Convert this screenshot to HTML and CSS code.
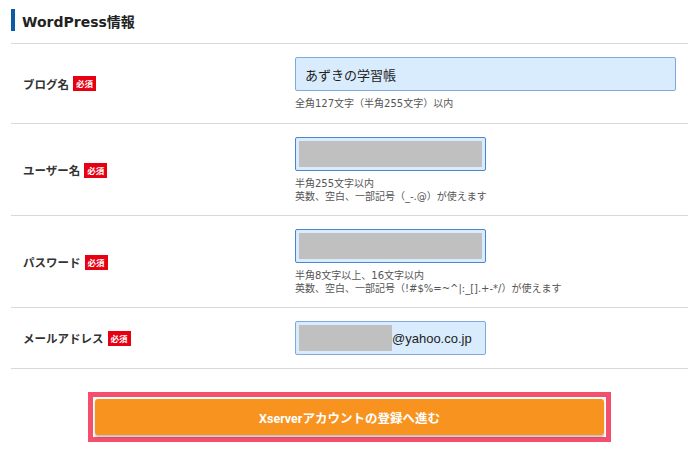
FILE: index.html
```html
<!DOCTYPE html>
<html lang="ja">

<head>
    <meta charset="UTF-8">
    <meta name="viewport" content="width=device-width, initial-scale=1.0">
    <link rel="stylesheet" href="styles.css">
    <title>WordPress情報</title>
</head>

<body>
    <div class="section">
        <h2 class="section-title">WordPress情報</h2>

        <div class="row row-first">
            <div class="label">ブログ名<span class="required">必須</span></div>
            <div class="field">
                <div class="input wide">あずきの学習帳</div>
                <p class="note">全角127文字（半角255文字）以内</p>
            </div>
        </div>

        <div class="row">
            <div class="label">ユーザー名<span class="required">必須</span></div>
            <div class="field">
                <div class="input"><span class="mask full"></span></div>
                <p class="note">半角255文字以内<br>英数、空白、一部記号（_-.@）が使えます</p>
            </div>
        </div>

        <div class="row">
            <div class="label">パスワード<span class="required">必須</span></div>
            <div class="field">
                <div class="input"><span class="mask full"></span></div>
                <p class="note">半角8文字以上、16文字以内<br>英数、空白、一部記号（!#$%=~^|:_[].+-*/）が使えます</p>
            </div>
        </div>

        <div class="row row-last">
            <div class="label">メールアドレス<span class="required">必須</span></div>
            <div class="field">
                <div class="input mail"><span class="mask part"></span>@yahoo.co.jp</div>
            </div>
        </div>

        <div class="actions">
            <div class="highlight">
                <button class="submit">Xserverアカウントの登録へ進む</button>
            </div>
        </div>
    </div>
</body>

</html>
```

FILE: styles.css
```css
* {
    margin: 0;
    padding: 0;
    box-sizing: border-box;
}

body {
    background-color: #fff;
    font-family: 'Noto Sans CJK JP', 'Noto Sans', sans-serif;
    color: #333;
}

.section {
    margin: 0 12px 0 11px;
}

.section-title {
    display: flex;
    align-items: center;
    height: 44px;
    padding: 0 0 2px 11px;
    font-family: 'DejaVu Sans', 'Noto Sans CJK JP', sans-serif;
    font-size: 14px;
    font-weight: bold;
    color: #222;
    border-bottom: 1px solid #d8d8d8;
    position: relative;
}

.section-title::before {
    content: '';
    position: absolute;
    left: 0;
    top: 9px;
    width: 4px;
    height: 22px;
    background-color: #0d5aa7;
}

.row {
    display: flex;
    align-items: center;
    padding: 13px 0 12px;
    border-bottom: 1px solid #d8d8d8;
}

.row-first,
.row-last {
    padding-bottom: 13px;
}

.label {
    width: 284px;
    padding-left: 12px;
    display: flex;
    align-items: center;
    font-size: 11.5px;
    font-weight: bold;
    color: #333;
}

.required {
    display: inline-block;
    margin-left: 4px;
    padding: 0 3px;
    height: 15px;
    line-height: 15px;
    font-size: 8.5px;
    font-weight: bold;
    color: #fff;
    background-color: #e60012;
}

.field {
    flex: 1;
}

.input {
    display: flex;
    align-items: center;
    width: 191px;
    height: 34px;
    padding: 0 3px;
    border: 1px solid #4a86c8;
    border-radius: 2px;
    background-color: #d9ecfd;
    font-size: 13px;
    color: #222;
}

.input.wide {
    width: 381px;
    padding-left: 9px;
    border-color: #7ea9d8;
}

.input.mail {
    font-family: 'Liberation Sans', Arial, sans-serif;
    font-size: 13px;
    border-color: #7ea9d8;
}

.mask {
    display: block;
    height: 26px;
    background-color: #c0c0c0;
}

.mask.full {
    width: 100%;
}

.mask.part {
    width: 93px;
}

.note {
    margin-top: 6px;
    font-family: 'DejaVu Sans', 'Noto Sans CJK JP', sans-serif;
    font-size: 10px;
    line-height: 13px;
    color: #555;
}

.actions {
    display: flex;
    padding: 23px 0 0 77px;
}

.highlight {
    width: 523px;
    padding: 2px;
    border: 5px solid #f54f6e;
}

.submit {
    display: block;
    width: 100%;
    height: 36px;
    border: none;
    border-radius: 3px;
    background-color: #f7931e;
    box-shadow: 0 2px 2px rgba(0, 0, 0, 0.25);
    font-family: 'Roboto', 'Noto Sans CJK JP', sans-serif;
    font-size: 12.5px;
    font-weight: bold;
    color: #fff;
    cursor: pointer;
}
```
